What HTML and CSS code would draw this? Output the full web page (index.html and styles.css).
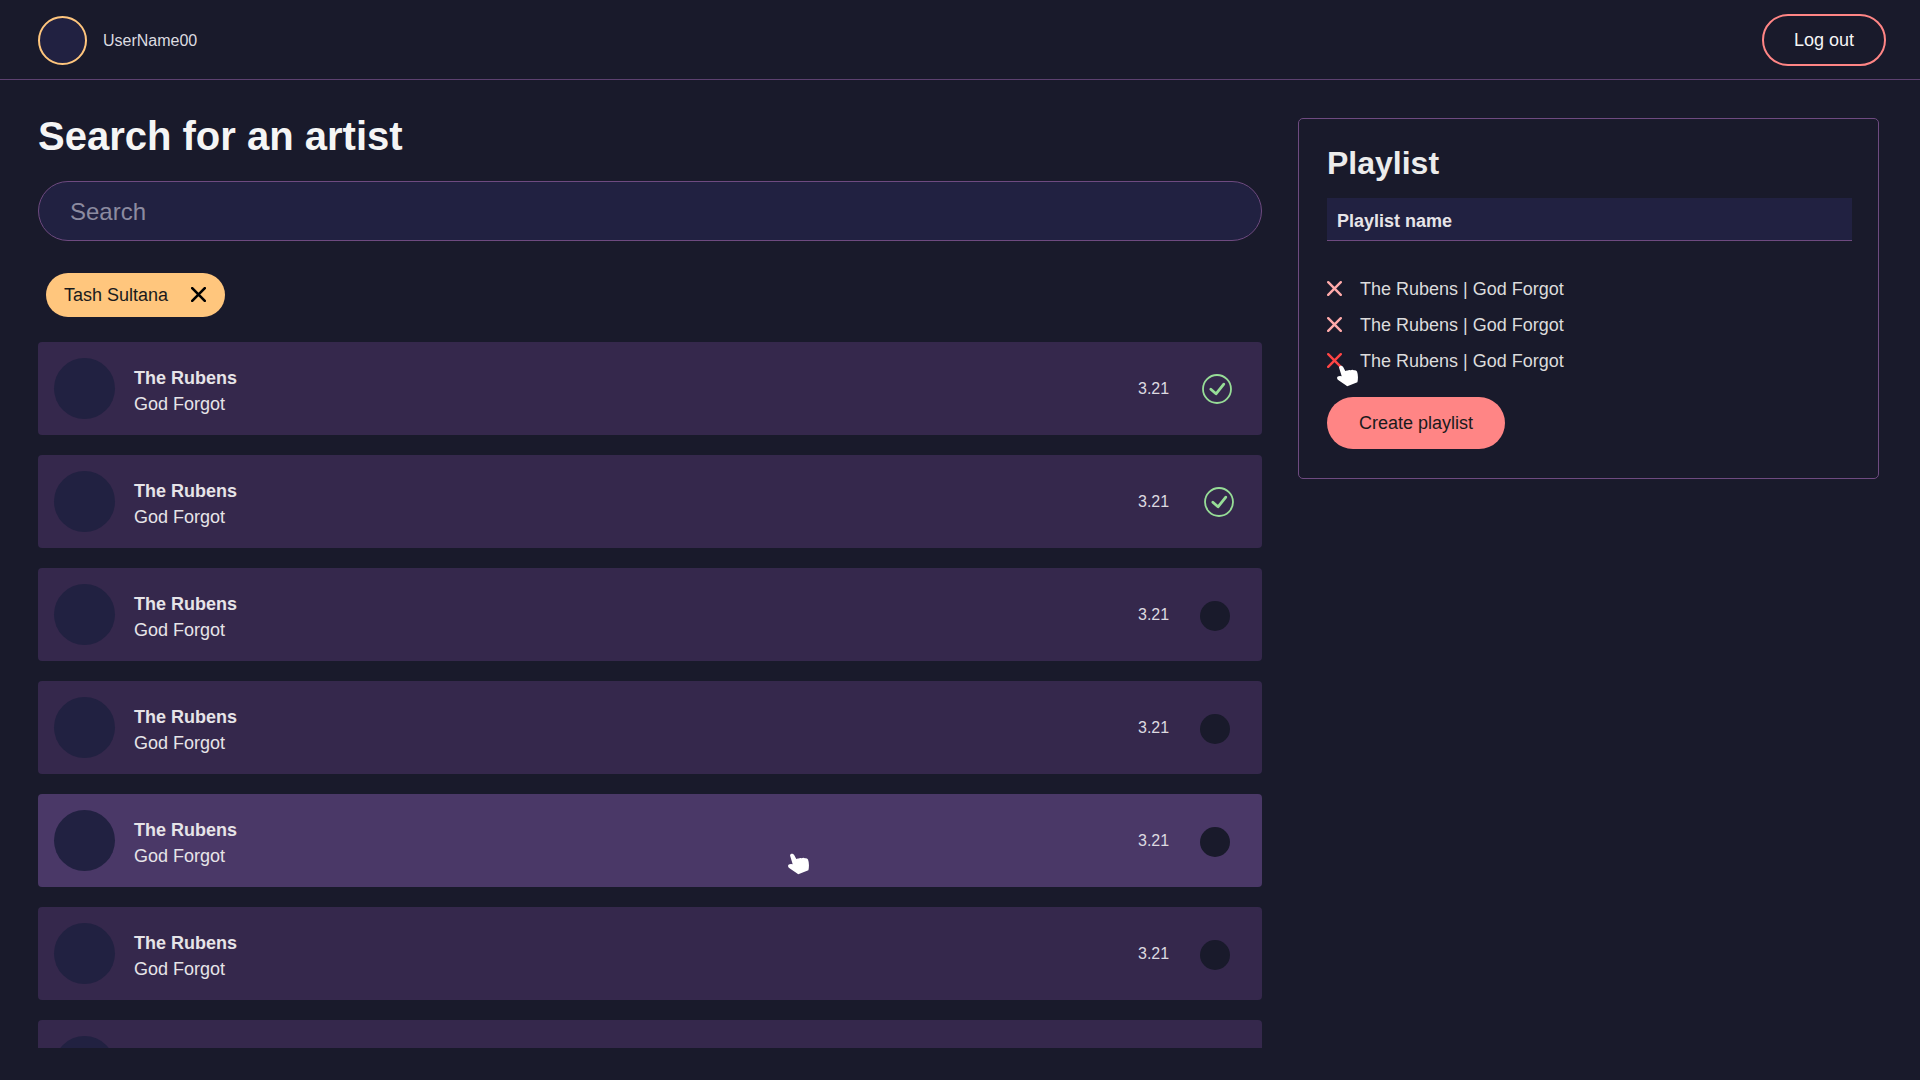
FILE: index.html
```html
<!DOCTYPE html>
<html lang="en">
<head>
<meta charset="utf-8">
<title>Search for an artist</title>
<link rel="stylesheet" href="styles.css">
</head>
<body>
<svg class="defs" width="0" height="0">
  <symbol id="cross" viewBox="0 0 15 15"><path d="M1.2 1.2L13.8 13.8M13.8 1.2L1.2 13.8"/></symbol>
  <symbol id="check" viewBox="0 0 30 30"><circle cx="15" cy="15" r="14"/><path class="tick" d="M8.8 15.2L14 19.8L21.8 10.2"/></symbol>
  <symbol id="hand" viewBox="0 0 22 22"><path d="M2.1 2.8C1.8 .3 5.2-.2 6.3 2.2L8.3 6.1Q9.3 5.1 10.6 5.5Q12.1 4.5 13.7 5.3Q15.2 4.4 17 5.3Q18.8 4.8 20 6.4Q21.7 11 20.4 17.2L10.3 21.2L.8 14.8Q-.5 13.2.5 11.8Q1.7 10.7 4.7 11.2Z"/></symbol>
</svg>
<header class="header">
  <div class="user"><span class="user-avatar"></span><span>UserName00</span></div>
  <button class="logout">Log out</button>
</header>
<main class="main">
  <section class="results">
    <h1 class="title">Search for an artist</h1>
    <input class="search" type="text" placeholder="Search">
    <div class="chip"><span>Tash Sultana</span><svg class="chip-cross"><use href="#cross"/></svg></div>
    <div class="tracks">
      <article class="track"><span class="cover"></span><div class="info"><strong>The Rubens</strong><span>God Forgot</span></div><span class="time">3.21</span><svg class="check"><use href="#check"/></svg></article>
      <article class="track"><span class="cover"></span><div class="info"><strong>The Rubens</strong><span>God Forgot</span></div><span class="time">3.21</span><svg class="check check-second"><use href="#check"/></svg></article>
      <article class="track"><span class="cover"></span><div class="info"><strong>The Rubens</strong><span>God Forgot</span></div><span class="time">3.21</span><span class="dot"></span></article>
      <article class="track"><span class="cover"></span><div class="info"><strong>The Rubens</strong><span>God Forgot</span></div><span class="time">3.21</span><span class="dot"></span></article>
      <article class="track track-active"><span class="cover"></span><div class="info"><strong>The Rubens</strong><span>God Forgot</span></div><span class="time">3.21</span><span class="dot"></span><svg class="hand hand-track"><use href="#hand"/></svg></article>
      <article class="track"><span class="cover"></span><div class="info"><strong>The Rubens</strong><span>God Forgot</span></div><span class="time">3.21</span><span class="dot"></span></article>
      <article class="track"><span class="cover"></span></article>
    </div>
  </section>
  <aside class="playlist">
    <h2 class="playlist-title">Playlist</h2>
    <div class="playlist-name">Playlist name</div>
    <ul class="songs">
      <li class="song"><svg class="remove"><use href="#cross"/></svg><span>The Rubens | God Forgot</span></li>
      <li class="song"><svg class="remove"><use href="#cross"/></svg><span>The Rubens | God Forgot</span></li>
      <li class="song"><svg class="remove remove-active"><use href="#cross"/></svg><span>The Rubens | God Forgot</span><svg class="hand hand-song"><use href="#hand"/></svg></li>
    </ul>
    <button class="create">Create playlist</button>
  </aside>
</main>
</body>
</html>
```
FILE: styles.css
```css
* { box-sizing: border-box; }
body {
  margin: 0;
  height: 1080px;
  overflow: hidden;
  background: #191a2b;
  color: #e6e4e8;
  font: 18px/26px "Liberation Sans", Arial, sans-serif;
}
button, input { font: inherit; }
h1, h2, ul { margin: 0; padding: 0; }
ul { list-style: none; }
.defs { display: block; height: 0; }
.header {
  display: flex;
  justify-content: space-between;
  height: 80px;
  padding: 14px 34px 0 38px;
  border-bottom: 1px solid #5c4170;
}
.user { display: flex; gap: 16px; height: 53px; align-items: center; font-size: 16px; color: #dddce0; }
.user-avatar { width: 49px; height: 49px; border: 2px solid #ffc67d; border-radius: 50%; background: #212141; }
.logout {
  width: 124px;
  height: 52px;
  padding: 0;
  border: 2px solid #ff8585;
  border-radius: 26px;
  background: transparent;
  color: #f5f5f5;
}
.main { display: flex; gap: 36px; align-items: flex-start; padding: 0 41px 0 38px; }
.results { width: 1224px; }
.title { padding-top: 33px; font-size: 40px; line-height: 46px; color: #f5f5f5; }
.search {
  display: block;
  width: 100%;
  height: 60px;
  margin-top: 22px;
  padding: 2px 31px 0;
  border: 1px solid #6e4a80;
  border-radius: 30px;
  background: #212141;
  color: #f5f5f5;
  font-size: 24px;
}
.search::placeholder { color: #8c8ba0; opacity: 1; }
.chip {
  display: flex;
  align-items: center;
  justify-content: space-between;
  width: 179px;
  height: 44px;
  margin: 32px 0 25px 8px;
  padding: 0 19px 0 18px;
  border-radius: 22px;
  background: #ffc67d;
  color: #191a1c;
}
.chip-cross { width: 15px; height: 15px; margin-bottom: 1px; stroke: #000; stroke-width: 2.6; stroke-linecap: round; }
.tracks { display: flex; flex-direction: column; gap: 20px; height: 706px; overflow: hidden; }
.track {
  position: relative;
  display: flex;
  flex: none;
  align-items: center;
  height: 93px;
  padding: 0 32px 0 16px;
  border-radius: 4px;
  background: #35284c;
}
.track-active { background: #4a3867; }
.cover { width: 61px; height: 61px; border-radius: 50%; background: #212141; }
.info { display: flex; flex-direction: column; flex: 1; padding: 4px 0 0 19px; }
.time { width: 62px; font-size: 16px; color: #dddae0; }
.check { width: 30px; height: 30px; margin: 0 -2px 0 2px; fill: none; stroke: #97dd97; stroke-width: 1.8; }
.check-second { margin: 0 -4px 0 4px; }
.tick { stroke-width: 2.8; stroke-linecap: round; stroke-linejoin: round; }
.dot { width: 30px; height: 30px; margin-top: 3px; border-radius: 50%; background: #191a2b; }
.hand { position: absolute; width: 22px; height: 22px; fill: #fff; }
.hand-track { left: 750px; top: 59px; }
.playlist {
  width: 581px;
  height: 361px;
  margin-top: 38px;
  padding: 26px 26px 0 28px;
  border: 1px solid #6e4a80;
  border-radius: 5px;
}
.playlist-title { font-size: 32px; line-height: 36px; color: #ececec; }
.playlist-name {
  height: 43px;
  margin-top: 17px;
  padding: 10px;
  border-bottom: 1px solid #6e4a80;
  background: #212141;
  font-weight: bold;
}
.songs { display: flex; flex-direction: column; gap: 10px; margin-top: 35px; }
.song { position: relative; display: flex; align-items: center; gap: 18px; color: #dcdcdc; }
.remove { width: 15px; height: 15px; margin-bottom: 1px; stroke: #ffaaaa; stroke-width: 2.4; stroke-linecap: round; }
.remove-active { stroke: #ff4545; }
.hand-song { left: 10px; top: 17px; }
.create {
  width: 178px;
  height: 52px;
  margin-top: 23px;
  padding: 0;
  border: 0;
  border-radius: 26px;
  background: #ff8585;
  color: #191a1c;
}
```
